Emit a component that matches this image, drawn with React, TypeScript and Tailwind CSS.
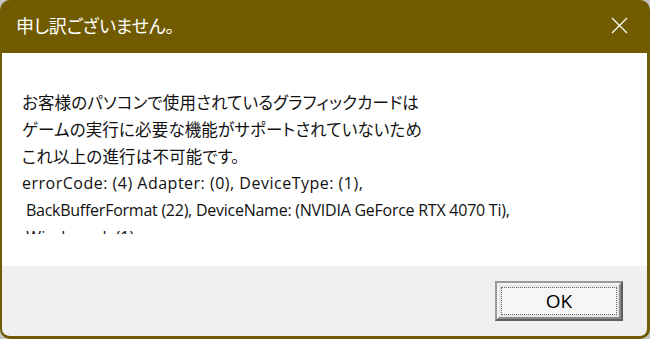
import React from 'react';

const jpFont = { fontFamily: '"Noto Sans CJK JP", "Noto Sans", sans-serif' };
const latinFont = { fontFamily: '"Open Sans", "Noto Sans", sans-serif' };

export default function App() {
  const jpLines = [
    'お客様のパソコンで使用されているグラフィックカードは',
    'ゲームの実行に必要な機能がサポートされていないため',
    'これ以上の進行は不可能です。',
  ];

  return (
    <div className="w-[650px] h-[339px] bg-[#c4c4c4]">
      <div
        className="w-full h-full flex flex-col rounded-[10px] overflow-hidden bg-[#705b00] border-l-2 border-r-[3px] border-b-[3px] border-[#705b00]"
        style={jpFont}
      >
        {/* title bar */}
        <div className="h-[53px] shrink-0 flex items-center justify-between pl-[14px] pr-[19px]">
          <span className="text-white text-[18px] tracking-[-0.2px] [font-feature-settings:'palt'] pb-[3px]">
            申し訳ございません。
          </span>
          <svg width="17" height="17" viewBox="0 0 17 17" className="mb-[3px]">
            <path d="M1 1 L16 16 M16 1 L1 16" stroke="#ffffff" strokeWidth="1.2" fill="none" />
          </svg>
        </div>

        {/* body */}
        <div className="h-[213px] shrink-0 bg-white pl-[20px] pt-[36px]">
          <div className="h-[145px] overflow-hidden text-[16.5px] leading-[27px] tracking-[0.15px] text-[#111] [font-feature-settings:'palt']">
            {jpLines.map((line) => (
              <div key={line} className="whitespace-nowrap">{line}</div>
            ))}
            <div className="whitespace-nowrap text-[16px] tracking-[0.5px]" style={latinFont}>
              errorCode: (4) Adapter: (0), DeviceType: (1),
            </div>
            <div className="whitespace-nowrap text-[16px] tracking-[-0.25px]" style={latinFont}>
              {'\u00a0BackBufferFormat (22), DeviceName: (NVIDIA GeForce RTX 4070 Ti),'}
            </div>
            <div className="whitespace-nowrap text-[16px]" style={latinFont}>
              {'\u00a0Windowed: (1)'}
            </div>
          </div>
        </div>

        {/* footer */}
        <div className="flex-1 bg-[#f0f0f0] flex items-start justify-end pr-[24px] pt-[15px]">
          <div className="w-[128px] h-[40px] border-2 border-t-[#9a9a9a] border-l-[#9a9a9a] border-r-[#5e5e5e] border-b-[#5e5e5e] bg-[#e6e6e6]">
            <div className="w-full h-full border-2 border-t-[#f4f4f4] border-l-[#f4f4f4] border-r-[#8c8c8c] border-b-[#8c8c8c] p-[2px]">
              <div className="w-full h-full border border-dotted border-[#6a6a6a] bg-[#f6f6f6] flex items-center justify-center">
                <span className="text-[19px] text-black leading-none" style={latinFont}>
                  OK
                </span>
              </div>
            </div>
          </div>
        </div>
      </div>
    </div>
  );
}
